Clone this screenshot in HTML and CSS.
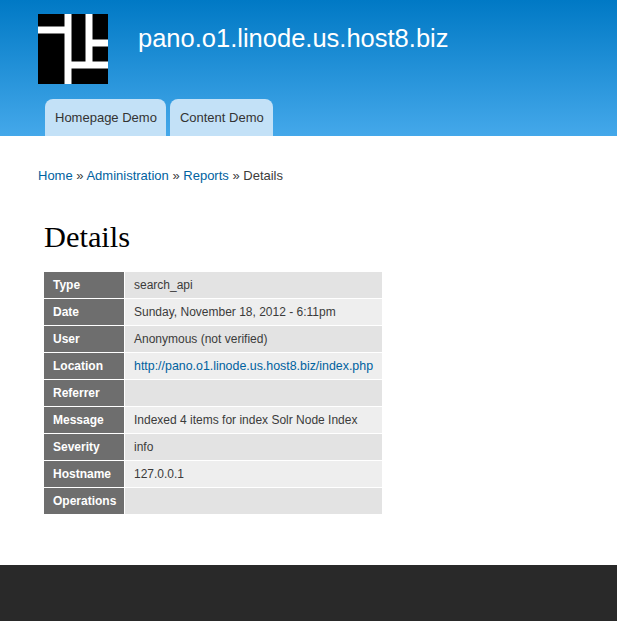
FILE: index.html
```html
<!DOCTYPE html>
<html lang="en">
	<head>
		<title>Details | pano.o1.linode.us.host8.biz</title>
		<meta charset="utf-8"/>
		<link rel="stylesheet" href="styles.css">
	</head>
	<body>
		<div class="header">
			<div class="branding">
				<svg class="logo" width="70" height="70" viewBox="0 0 70 70">
					<rect width="70" height="70" fill="#000"/>
					<path d="M0 16h27M30 0v70M30 51h40M51 0v51M51 29h19" stroke="#fff" stroke-width="7" fill="none"/>
				</svg>
				<a class="site-name" href="#">pano.o1.linode.us.host8.biz</a>
			</div>
			<ul class="tabs">
				<li><a href="#">Homepage Demo</a></li>
				<li><a href="#">Content Demo</a></li>
			</ul>
		</div>

		<div class="content">
			<div class="breadcrumb">
				<a href="#">Home</a> » <a href="#">Administration</a> » <a href="#">Reports</a> » Details
			</div>

			<h1 class="title">Details</h1>

			<table class="details">
				<tr class="odd"><th>Type</th><td>search_api</td></tr>
				<tr class="even"><th>Date</th><td>Sunday, November 18, 2012 - 6:11pm</td></tr>
				<tr class="odd"><th>User</th><td>Anonymous (not verified)</td></tr>
				<tr class="even"><th>Location</th><td><a href="#">http://pano.o1.linode.us.host8.biz/index.php</a></td></tr>
				<tr class="odd"><th>Referrer</th><td></td></tr>
				<tr class="even"><th>Message</th><td>Indexed 4 items for index Solr Node Index</td></tr>
				<tr class="odd"><th>Severity</th><td>info</td></tr>
				<tr class="even"><th>Hostname</th><td>127.0.0.1</td></tr>
				<tr class="odd"><th>Operations</th><td></td></tr>
			</table>
		</div>

		<div class="footer"></div>
	</body>
</html>
```
FILE: styles.css
```css
body, html {
	margin: 0;
	font-family: 'Liberation Sans', Arial, sans-serif;
	font-size: 13px;
	color: #3b3b3b;
	background-color: #fff;
}

a {
	color: #0062a0;
	text-decoration: none;
}

.header {
	height: 136px;
	background: linear-gradient(to bottom, #0079c5, #44a8ea);
	display: flex;
	flex-direction: column;
}

.branding {
	display: flex;
	align-items: flex-start;
	padding: 14px 0 0 38px;
	height: 85px;
}

.logo {
	display: block;
}

.site-name {
	color: #fff;
	font-size: 25.5px;
	line-height: 28px;
	margin: 10px 0 0 30px;
}

.tabs {
	list-style: none;
	display: flex;
	gap: 4px;
	margin: 0;
	padding: 0 0 0 45px;
}

.tabs a {
	display: block;
	height: 37px;
	line-height: 37px;
	padding: 0 9px 0 10px;
	color: #333;
	background-color: #c3e1f7;
	border-radius: 8px 8px 0 0;
}

.content {
	height: 429px;
	padding: 32px 0 0 38px;
	box-sizing: border-box;
}

.breadcrumb {
	line-height: 15px;
}

.title {
	font-family: 'Liberation Serif', Georgia, serif;
	font-weight: normal;
	font-size: 30.4px;
	line-height: 34px;
	color: #000;
	margin: 37px 0 18px 6px;
}

.details {
	border-collapse: collapse;
	margin-left: 6px;
	width: 338px;
	font-size: 12px;
}

.details th, .details td {
	height: 26px;
	padding: 0 0 0 9px;
	border-bottom: 1px solid #fff;
	text-align: left;
	box-sizing: content-box;
}

.details td a {
	font-size: 12.4px;
}

.details tr:last-child th, .details tr:last-child td {
	border-bottom: none;
}

.details th {
	width: 71px;
	background-color: #6e6e6e;
	color: #fff;
	border-right: 1px solid #fff;
}

.odd td {
	background-color: #e3e3e3;
}

.even td {
	background-color: #eeeeee;
}

.footer {
	height: 56px;
	background-color: #292929;
}
```
